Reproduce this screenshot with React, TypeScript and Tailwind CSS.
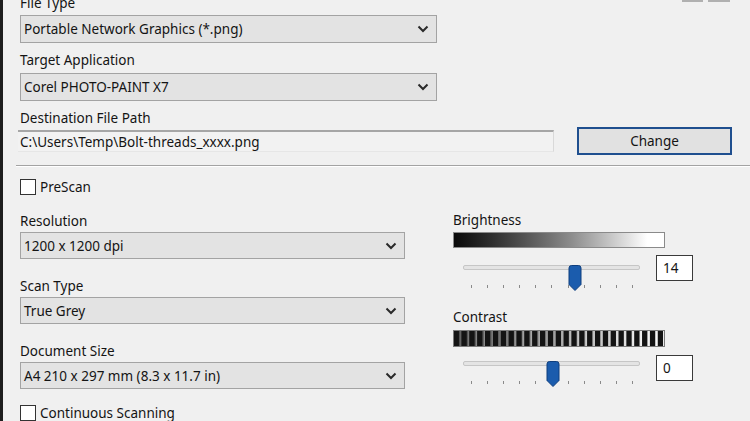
import React from "react";

function Chevron() {
  return (
    <svg width="12" height="8" viewBox="0 0 12 8" className="shrink-0">
      <path d="M1.5 1.5 L6 6 L10.5 1.5" fill="none" stroke="#2a2a2a" strokeWidth="2" />
    </svg>
  );
}

function Select({ value, className }: { value: string; className: string }) {
  return (
    <div
      className={
        "flex items-center justify-between border border-[#a3a3a3] bg-[#e3e3e3] pl-[3px] pr-[7px] " +
        className
      }
    >
      <span className="leading-4">{value}</span>
      <Chevron />
    </div>
  );
}

function Checkbox({ label, className }: { label: string; className?: string }) {
  return (
    <div className={"flex items-center gap-[4px] " + (className ?? "")}>
      <div className="w-[16px] h-[16px] border border-[#333] bg-white" />
      <span className="leading-4">{label}</span>
    </div>
  );
}

function Thumb() {
  return (
    <svg width="14" height="26" viewBox="0 0 14 26">
      <path
        d="M1 3 Q1 0.5 3.5 0.5 H10.5 Q13 0.5 13 3 V19.5 L7 25.5 L1 19.5 Z"
        fill="#1b5cad"
        stroke="#0f3f7e"
        strokeWidth="1"
      />
    </svg>
  );
}

function Slider({ left, trackMt, tickMt }: { left: number; trackMt: string; tickMt: string }) {
  const ticks = Array.from({ length: 11 });
  return (
    <div className="relative w-[177px]">
      <div className={"h-[5px] rounded-[2px] border border-[#c6c6c6] bg-[#e4e4e4] " + trackMt} />
      <div className={"flex justify-between pl-[8px] pr-[7px] " + tickMt}>
        {ticks.map((_, i) => (
          <div key={i} className="w-px h-[3px] bg-[#8a8a8a]" />
        ))}
      </div>
      <div className="absolute top-0" style={{ left }}>
        <Thumb />
      </div>
    </div>
  );
}

function Stripes() {
  const n = 27;
  const w = 212;
  const p = w / n;
  const rects = [];
  for (let i = 0; i < n; i++) {
    const t = i / (n - 1);
    const g = Math.round(0x50 + (0xff - 0x50) * t);
    const hex = g.toString(16).padStart(2, "0");
    rects.push(<rect key={"g" + i} x={i * p} y={0} width={p} height={17} fill={`#${hex}${hex}${hex}`} />);
    rects.push(<rect key={"d" + i} x={i * p + 0.6} y={0} width={p * 0.68} height={17} fill="#141414" />);
  }
  return (
    <svg width={w} height={17} viewBox={`0 0 ${w} 17`} className="block">
      {rects}
      <rect x="0.5" y="0.5" width={w - 1} height="16" fill="none" stroke="#7a7a7a" />
    </svg>
  );
}

export default function App() {
  return (
    <div className="relative w-[750px] h-[421px] overflow-hidden bg-[#f0f0f0] border-l-[3px] border-[#1e1e1e] font-['Noto_Sans',sans-serif] text-[13.5px] text-[#141414]">
      <div className="absolute top-0 left-[679px] flex gap-[5px]">
        <div className="w-[21px] h-[2px] bg-[#b0b0b0]" />
        <div className="w-[22px] h-[2px] bg-[#b0b0b0]" />
      </div>

      <div className="-mt-[5px] pl-[17px]">
        <div className="leading-4">File Type</div>
        <Select value="Portable Network Graphics (*.png)" className="mt-[4px] w-[417px] h-[28px]" />
        <div className="leading-4 mt-[9px]">Target Application</div>
        <Select value="Corel PHOTO-PAINT X7" className="mt-[5px] w-[417px] h-[28px]" />
        <div className="leading-4 mt-[9px]">Destination File Path</div>
        <div className="mt-[1px] flex items-center">
          <div className="w-[536px] h-[22px] -ml-[2px] pl-[2px] flex items-center border-t-2 border-t-[#a6a6a6] border-r border-r-[#d9d9d9] border-b border-b-[#e6e6e6] bg-[#f2f2f2]">
            <span className="leading-4">C:\Users\Temp\Bolt-threads_xxxx.png</span>
          </div>
          <div className="ml-[23px] w-[155px] h-[28px] border-2 border-[#1f4f8f] bg-[#e1e1e1] flex items-center justify-center">
            <span className="leading-4">Change</span>
          </div>
        </div>
      </div>

      <div className="ml-[13px] mt-[10px] border-t border-t-[#a3a3a3] border-b border-b-white" />

      <div className="pl-[17px]">
        <Checkbox label="PreScan" className="mt-[12px]" />

        <div className="flex mt-[18px]">
          <div className="w-[385px]">
            <div className="leading-4">Resolution</div>
            <Select value="1200 x 1200 dpi" className="mt-[3px] w-[385px] h-[27px]" />
            <div className="leading-4 mt-[19px]">Scan Type</div>
            <Select value="True Grey" className="mt-[3px] w-[385px] h-[27px]" />
            <div className="leading-4 mt-[19px]">Document Size</div>
            <Select value="A4 210 x 297 mm (8.3 x 11.7 in)" className="mt-[3px] w-[385px] h-[27px]" />
            <Checkbox label="Continuous Scanning" className="mt-[16px]" />
          </div>

          <div className="ml-[48px] w-[245px]">
            <div className="leading-4 -mt-px">Brightness</div>
            <div className="mt-[4px] w-[212px] h-[16px] border border-[#8a8a8a] bg-linear-to-r from-[#0a0a0a] via-[#8a8a8a] via-55% to-white to-92%" />
            <div className="mt-[7px] flex items-start pl-[10px]">
              <div className="mt-[2px]">
                <Slider left={105} trackMt="mt-[8px]" tickMt="mt-[15px]" />
              </div>
              <div className="ml-[16px] w-[37px] h-[26px] border border-[#3a3a3a] bg-white flex items-center pl-[6px]">
                <span className="leading-4">14</span>
              </div>
            </div>

            <div className="leading-4 mt-[21px]">Contrast</div>
            <div className="mt-[5px]">
              <Stripes />
            </div>
            <div className="mt-[7px] flex items-start pl-[10px]">
              <div>
                <Slider left={83} trackMt="mt-[7px]" tickMt="mt-[15px]" />
              </div>
              <div className="ml-[16px] mt-px w-[37px] h-[26px] border border-[#3a3a3a] bg-white flex items-center pl-[6px]">
                <span className="leading-4">0</span>
              </div>
            </div>
          </div>
        </div>
      </div>
    </div>
  );
}
